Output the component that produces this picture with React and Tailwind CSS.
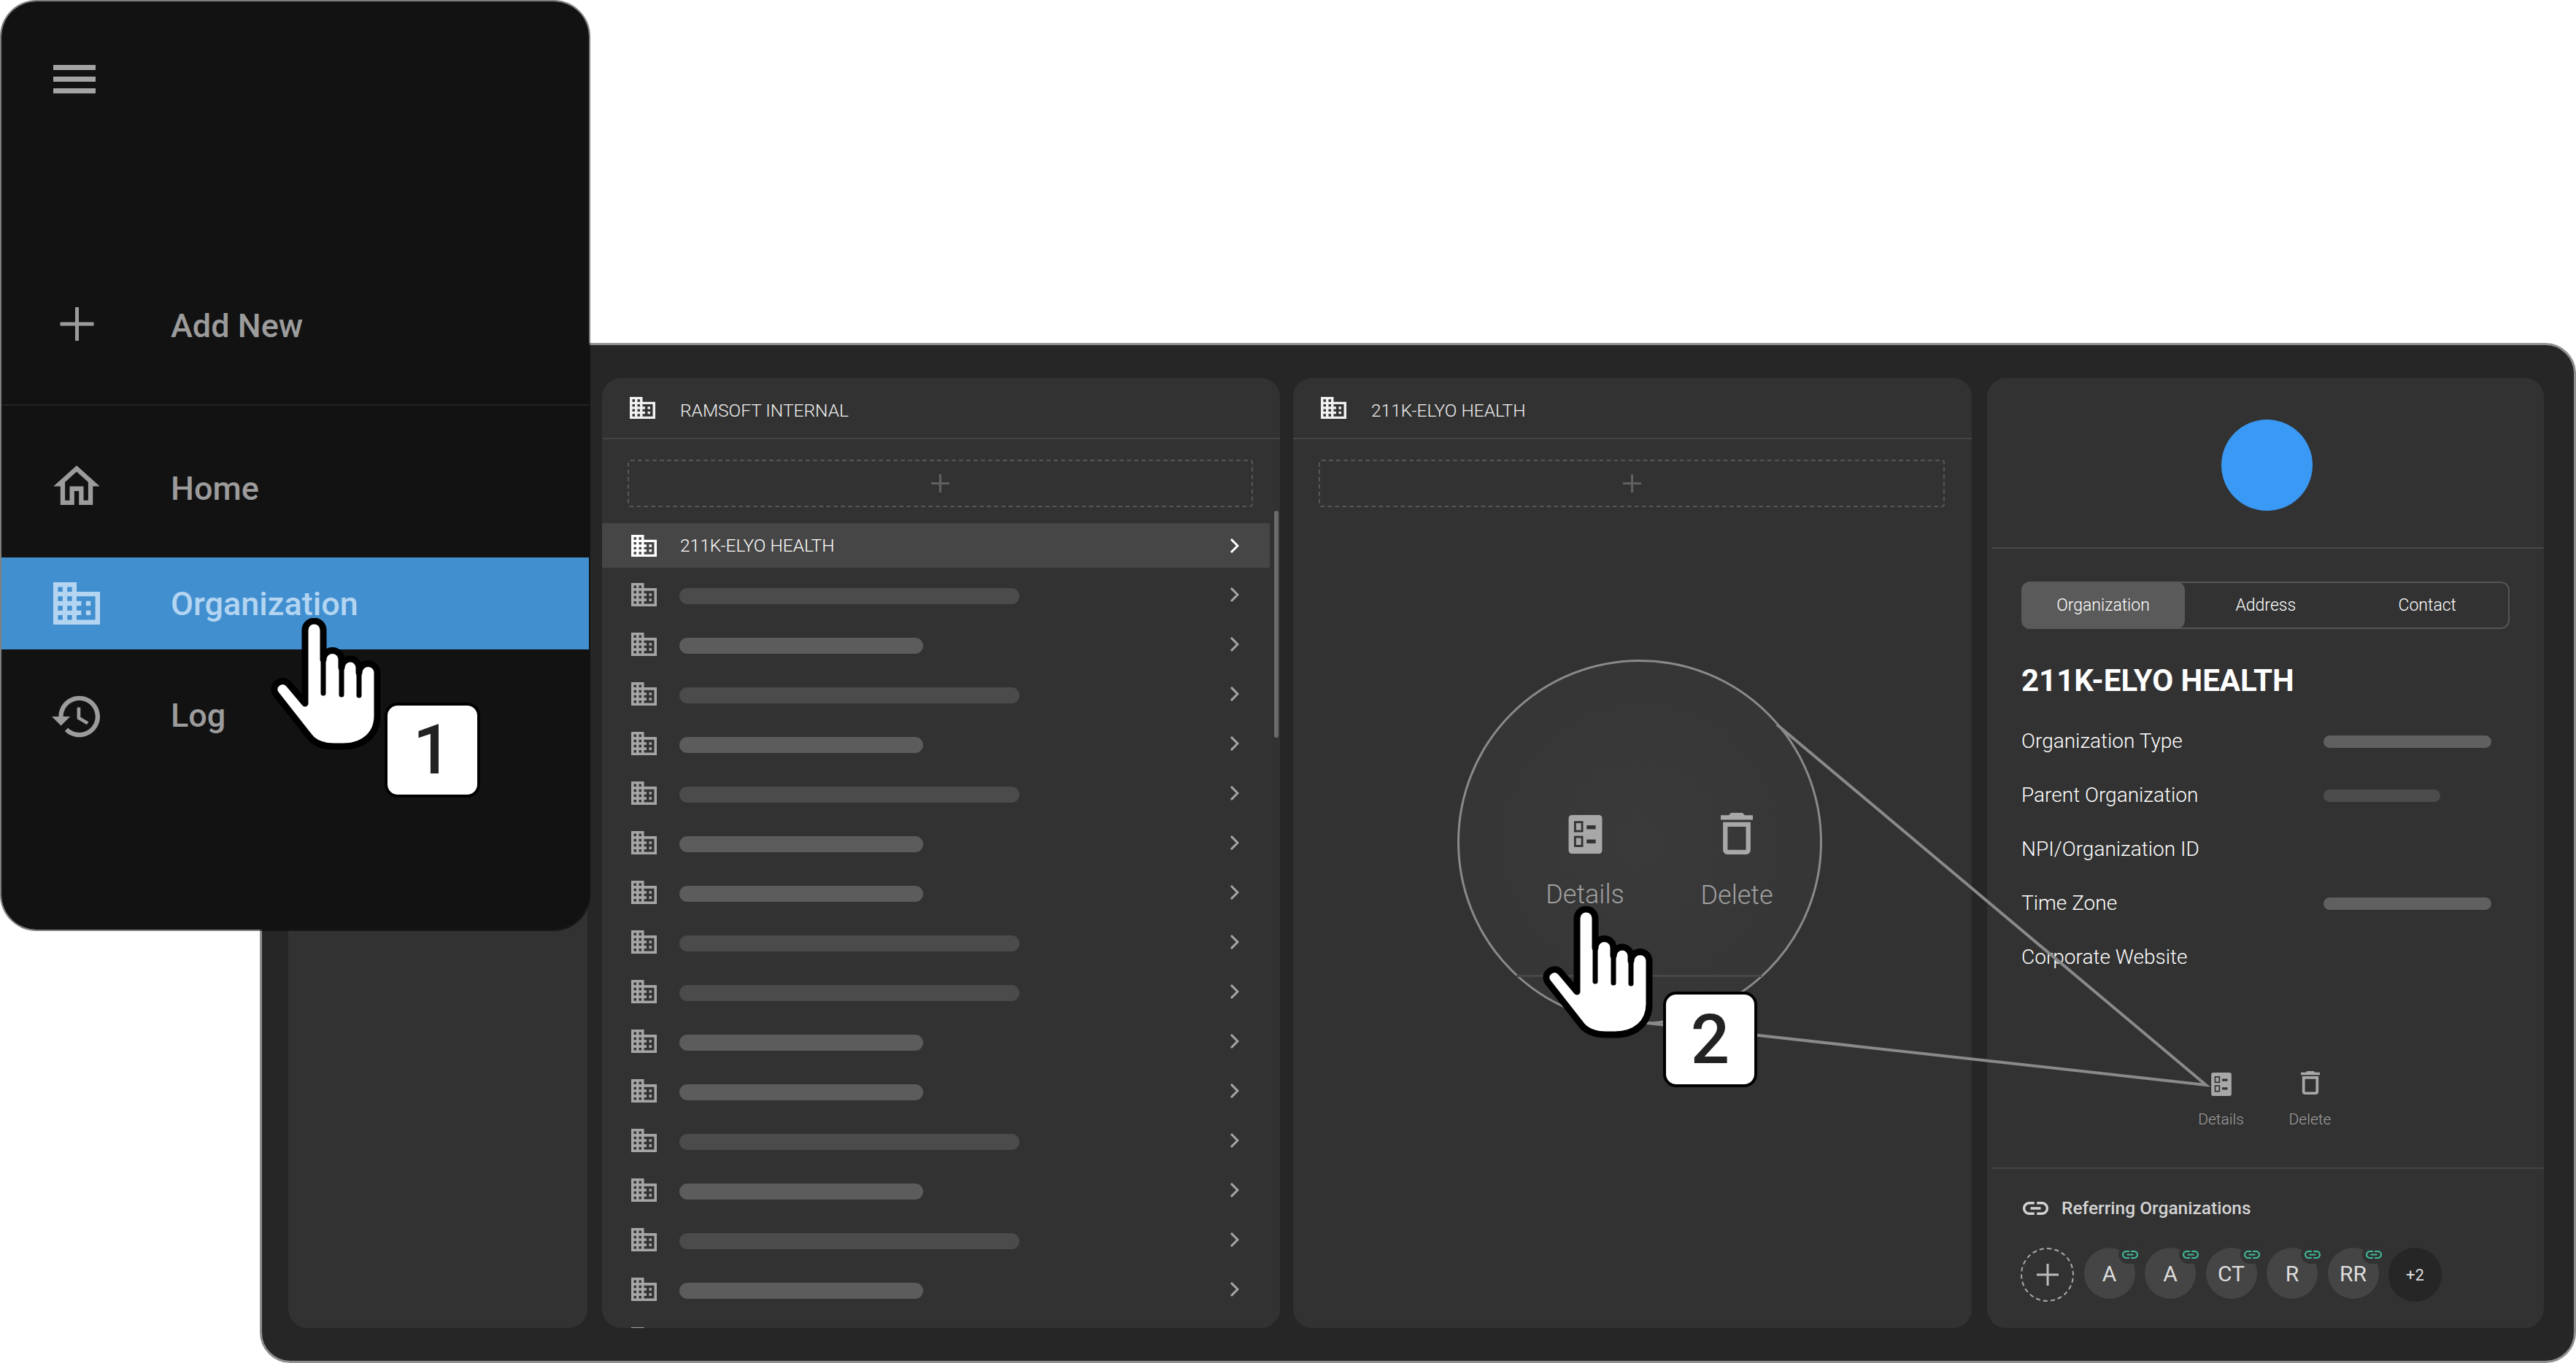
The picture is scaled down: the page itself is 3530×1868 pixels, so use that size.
import React from 'react';

const DOMAIN = 'M12 7V3H2v18h20V7H12zM6 19H4v-2h2v2zm0-4H4v-2h2v2zm0-4H4V9h2v2zm0-4H4V5h2v2zm4 12H8v-2h2v2zm0-4H8v-2h2v2zm0-4H8V9h2v2zm0-4H8V5h2v2zm10 12h-8v-2h2v-2h-2v-2h2v-2h-2V9h8v10zm-2-8h-2v2h2v-2zm0 4h-2v2h2v-2z';
const HOME = 'M12 5.69l5 4.5V18h-2v-6H9v6H7v-7.81l5-4.5M12 3L2 12h3v8h6v-6h2v6h6v-8h3L12 3z';
const HISTORY = 'M13 3c-4.97 0-9 4.03-9 9H1l3.89 3.89.07.14L9 12H6c0-3.87 3.13-7 7-7s7 3.13 7 7-3.13 7-7 7c-1.93 0-3.68-.79-4.94-2.06l-1.42 1.42C8.27 19.99 10.51 21 13 21c4.97 0 9-4.03 9-9s-4.03-9-9-9zm-1 5v5l4.28 2.54.72-1.21-3.5-2.08V8H12z';
const TRASH = 'M6 19c0 1.1.9 2 2 2h8c1.1 0 2-.9 2-2V7H6v12zM8 9h8v10H8V9zm7.5-5l-1-1h-5l-1 1H5v2h14V4z';
const LINK = 'M3.9 12c0-1.71 1.39-3.1 3.1-3.1h4V7H7c-2.76 0-5 2.24-5 5s2.24 5 5 5h4v-1.9H7c-1.71 0-3.1-1.39-3.1-3.1zM8 13h8v-2H8v2zm9-6h-4v1.9h4c1.71 0 3.1 1.39 3.1 3.1s-1.39 3.1-3.1 3.1h-4V17h4c2.76 0 5-2.24 5-5s-2.24-5-5-5z';

function Building({ className }) {
  return (
    <svg viewBox="2 3 20 18" preserveAspectRatio="none" className={className} fill="currentColor">
      <path d={DOMAIN} />
    </svg>
  );
}

function Chevron({ className }) {
  return (
    <svg viewBox="0 0 13 20" className={className} fill="none" stroke="currentColor" strokeWidth="3">
      <path d="M2 1l9 9-9 9" />
    </svg>
  );
}

function Plus({ className, width = 3 }) {
  return (
    <svg viewBox="0 0 24 24" className={className} fill="none" stroke="currentColor" strokeWidth={width}>
      <path d="M12 0v24M0 12h24" />
    </svg>
  );
}

function DetailsIcon({ className }) {
  return (
    <svg viewBox="0 0 26 30" className={className}>
      <rect width="26" height="30" rx="2.5" fill="#a8a8a8" />
      <rect x="5" y="5.5" width="5.5" height="7" fill="none" stroke="#323232" strokeWidth="1.6" />
      <rect x="5" y="17" width="5.5" height="7" fill="none" stroke="#323232" strokeWidth="1.6" />
      <rect x="14" y="8" width="7" height="3" fill="#323232" />
      <rect x="14" y="19" width="7" height="3" fill="#323232" />
    </svg>
  );
}

function TrashIcon({ className }) {
  return (
    <svg viewBox="5 3 14 18" preserveAspectRatio="none" className={className} fill="currentColor">
      <path d={TRASH} />
    </svg>
  );
}

function LinkIcon({ className }) {
  return (
    <svg viewBox="2 7 20 10" preserveAspectRatio="none" className={className} fill="currentColor">
      <path d={LINK} />
    </svg>
  );
}

function Hand({ className }) {
  return (
    <svg viewBox="0 0 152 181" className={className}>
      <path
        d="M48 117V16.5a12.5 12.5 0 0 1 25 0V57a12.5 12.5 0 0 1 25 0v11a12 12 0 0 1 24 0v7a12.5 12.5 0 0 1 25 0v59c0 26-19 42-47 42H88c-16 0-28-4-36-16L8 104c-8-12 9-24 18-13z"
        fill="#fff"
        stroke="#000"
        strokeWidth="9"
        strokeLinejoin="round"
      />
      <path d="M73 50v53M98 62v43M122 72v34" fill="none" stroke="#000" strokeWidth="7" strokeLinecap="round" />
    </svg>
  );
}

function StepBadge({ children, className }) {
  return (
    <div className={`absolute flex items-center justify-center rounded-[18px] border-[4px] border-black bg-white text-[94px] leading-none font-medium text-[#222] ${className}`}>
      {children}
    </div>
  );
}

function NavRow({ icon, label, className = '', text = 'text-[#9c9c9c]', labelClass = '' }) {
  return (
    <div className={`flex h-[126px] items-center ${text} ${className}`}>
      <div className="flex w-[232px] shrink-0 pl-[71px]">{icon}</div>
      <span className={`text-[45px] leading-none font-medium ${labelClass}`}>{label}</span>
    </div>
  );
}

function Sidebar() {
  return (
    <div className="absolute top-0 left-0 flex h-[1276px] w-[809px] flex-col rounded-[50px] border-2 border-black/50 bg-[#121212] bg-clip-padding">
      <div className="mt-[87px] ml-[71px] flex w-[58px] flex-col gap-[9px]">
        <div className="h-[7px] bg-[#a4a4a4]" />
        <div className="h-[7px] bg-[#a4a4a4]" />
        <div className="h-[7px] bg-[#a4a4a4]" />
      </div>
      <NavRow
        className="mt-[253px]"
        labelClass="translate-y-[2px]"
        icon={<Plus className="ml-[9px] h-[46px] w-[47px]" width={2.6} />}
        label="Add New"
      />
      <div className="mt-[47px] h-[2px] bg-[#232323]" />
      <NavRow
        className="mt-[46px]"
        labelClass="translate-y-[4px]"
        icon={
          <svg viewBox="2 3 20 17" className="h-[54px] w-[64px]" fill="currentColor">
            <path d={HOME} />
          </svg>
        }
        label="Home"
      />
      <NavRow
        className="mt-[36px] bg-[#428fd0]"
        text="text-[#b4d5f1]"
        icon={<Building className="h-[58px] w-[64px]" />}
        label="Organization"
      />
      <NavRow
        className="mt-[29px]"
        labelClass="-translate-y-[2px]"
        icon={
          <svg viewBox="1 3 21 18" className="-ml-[2px] h-[58px] w-[66px]" fill="currentColor">
            <path d={HISTORY} />
          </svg>
        }
        label="Log"
      />
    </div>
  );
}

function DashedAdd() {
  return (
    <div className="mt-[28px] mr-[37px] ml-[35px] flex h-[65px] items-center justify-center rounded-[4px] border-2 border-dashed border-[#565656] text-[#606060]">
      <Plus className="h-[25px] w-[25px]" />
    </div>
  );
}

function PanelHeader({ title }) {
  return (
    <div className="flex h-[84px] items-center border-b-2 border-[#444] pl-[38px] text-[#f0f0f0]">
      <Building className="h-[30px] w-[35px]" />
      <span className="ml-[34px] translate-y-[4px] text-[24.5px] leading-none font-light">{title}</span>
    </div>
  );
}

// bar width per row, long ones are the darker grey
const rows = [466, 334, 466, 334, 466, 334, 334, 466, 466, 334, 334, 466, 334, 466, 334, 466];

function OrgListPanel() {
  return (
    <div className="relative h-full w-[929px] shrink-0 overflow-hidden rounded-[26px] bg-[#323232]">
      <PanelHeader title="RAMSOFT INTERNAL" />
      <DashedAdd />
      <div className="mt-[22px] flex h-[61px] w-[915px] items-center bg-[#464646] pr-[42px] pl-[40px] text-white">
        <Building className="h-[30px] w-[35px]" />
        <span className="ml-[32px] translate-y-[1px] text-[24.5px] leading-none font-light">211K-ELYO HEALTH</span>
        <Chevron className="ml-auto h-[20px] w-[13px]" />
      </div>
      <div className="mt-[3px] w-[915px]">
        {rows.map((w, i) => (
          <div key={i} className="flex h-[68px] items-center pr-[42px] pl-[40px] text-[#a6a6a6]">
            <Building className="h-[32px] w-[35px]" />
            <div
              className="ml-[31px] h-[22px] translate-y-[2px] rounded-full"
              style={{ width: w, backgroundColor: w === 466 ? '#4b4b4b' : '#5c5c5c' }}
            />
            <Chevron className="ml-auto h-[20px] w-[13px]" />
          </div>
        ))}
      </div>
      <div className="absolute top-[182px] left-[921px] h-[311px] w-[6px] rounded-full bg-[#6b6b6b]" />
    </div>
  );
}

function DetailRow({ label, bar, color = 'bg-[#606060]' }) {
  return (
    <div className="flex h-[74px] items-center">
      <span className="w-[414px] text-[28px] leading-none font-light text-white">{label}</span>
      {bar && <div className={`h-[17px] rounded-full ${color} ${bar}`} />}
    </div>
  );
}

function Avatar({ text }) {
  return (
    <div className="relative flex h-[70px] w-[70px] items-center justify-center rounded-full bg-[#454545] text-[30px] text-[#ddd]">
      {text}
      <div className="absolute top-[-4px] left-[47px] flex h-[26px] w-[32px] items-center justify-center rounded-full bg-[#323232] text-[#3fb99a]">
        <LinkIcon className="h-[11px] w-[22px]" />
      </div>
    </div>
  );
}

function InfoPanel() {
  return (
    <div className="flex h-full w-[763px] shrink-0 flex-col overflow-hidden rounded-[26px] bg-[#323232]">
      <div className="mt-[57px] ml-[4px] h-[125px] w-[125px] self-center rounded-full bg-[#3a99f5]" />
      <div className="mt-[50px] ml-[6px] h-[2px] bg-[#484848]" />
      <div className="mx-[47px] mt-[45px] flex h-[65px] items-center rounded-[12px] border-2 border-[#555] text-[23px] leading-none font-light text-white">
        <div className="-ml-[2px] flex h-[65px] w-[224px] items-center justify-center rounded-[12px] bg-[#5a5a5a]">Organization</div>
        <div className="flex-1 text-center">Address</div>
        <div className="flex-1 text-center">Contact</div>
      </div>
      <div className="mt-[48px] pl-[47px] text-[42px] leading-[46px] font-bold text-white">211K-ELYO HEALTH</div>
      <div className="mt-[23px] pl-[47px]">
        <DetailRow label="Organization Type" bar="w-[230px]" />
        <DetailRow label="Parent Organization" bar="w-[160px]" color="bg-[#4c4c4c]" />
        <DetailRow label="NPI/Organization ID" />
        <DetailRow label="Time Zone" bar="w-[230px]" />
        <DetailRow label="Corporate Website" />
      </div>
      <div className="mt-[119px] flex justify-center gap-[22px] text-[21px] leading-[24px] font-light text-[#a0a0a0]">
        <div className="flex w-[100px] flex-col items-center">
          <DetailsIcon className="mt-[2px] h-[32px] w-[32px]" />
          <span className="mt-[20px]">Details</span>
        </div>
        <div className="flex w-[100px] flex-col items-center">
          <TrashIcon className="h-[32px] w-[26px] text-[#a8a8a8]" />
          <span className="mt-[22px]">Delete</span>
        </div>
      </div>
      <div className="mt-[54px] ml-[6px] h-[2px] bg-[#444]" />
      <div className="mt-[40px] flex items-center gap-[18px] pl-[49px] text-[#d4d4d4]">
        <LinkIcon className="h-[18px] w-[35px]" />
        <span className="text-[24.5px] leading-[28px] font-medium">Referring Organizations</span>
      </div>
      <div className="mt-[40px] flex items-start gap-[13.5px] pl-[46px]">
        <div className="flex h-[74px] w-[73px] items-center justify-center rounded-full border-2 border-dashed border-[#aaa] text-[#bbb]">
          <Plus className="h-[30px] w-[30px]" width={2.4} />
        </div>
        <Avatar text="A" />
        <Avatar text="A" />
        <Avatar text="CT" />
        <Avatar text="R" />
        <Avatar text="RR" />
        <div className="flex h-[74px] w-[73px] items-center justify-center rounded-full bg-[#262626] text-[22px] text-[#ddd]">+2</div>
      </div>
    </div>
  );
}

export default function App() {
  return (
    <div className="relative h-[1868px] w-[3530px] overflow-hidden bg-white pt-[470px] pl-[356px] font-[family-name:Roboto,sans-serif]">
      <div className="flex h-[1398px] w-[3174px] gap-[20px] rounded-[42px] border-[3px] border-[#8f8f8f] bg-[#262626] pt-[45px] pr-[41px] pb-[45px] pl-[36px]">
        <div className="h-full w-[410px] shrink-0 rounded-[26px] bg-[#323232]" />
        <OrgListPanel />
        <div className="-ml-[2px] h-full w-[930px] shrink-0 overflow-hidden rounded-[26px] bg-[#323232]">
          <PanelHeader title="211K-ELYO HEALTH" />
          <DashedAdd />
        </div>
        <div className="ml-px">
          <InfoPanel />
        </div>
      </div>

      {/* magnified actions */}
      <div className="absolute top-[904px] left-[1997px] flex h-[500px] w-[500px] justify-center rounded-full border-[3px] border-[#8a8a8a] bg-[radial-gradient(circle,#3a3a3a_0%,#363636_70%,#333333_100%)] pt-[207px] pl-[58px] text-[36px] leading-[44px] font-light text-[#a0a0a0]">
        <div className="flex w-[120px] flex-col items-center">
          <DetailsIcon className="mt-[3px] h-[53px] w-[53px]" />
          <span className="mt-[34px]">Details</span>
        </div>
        <div className="ml-[88px] flex w-[120px] flex-col items-center">
          <TrashIcon className="h-[57px] w-[44px] text-[#a8a8a8]" />
          <span className="mt-[34px]">Delete</span>
        </div>
        <div className="absolute top-[429px] left-[78px] h-[3px] w-[336px] bg-[#474747]" />
      </div>

      {/* connector lines */}
      <svg className="pointer-events-none absolute top-0 left-0" width="3530" height="1868" fill="none" stroke="#8a8a8a" strokeWidth="4">
        <path d="M2435 993L3023 1487L2230 1399" />
      </svg>

      <Sidebar />

      <Hand className="absolute top-[847px] left-[370px] h-[181px] w-[152px]" />
      <StepBadge className="top-[963px] left-[527px] h-[130px] w-[131px]">1</StepBadge>
      <Hand className="absolute top-[1242px] left-[2113px] h-[181px] w-[152px]" />
      <StepBadge className="top-[1359px] left-[2279px] h-[131px] w-[129px]">2</StepBadge>
    </div>
  );
}
